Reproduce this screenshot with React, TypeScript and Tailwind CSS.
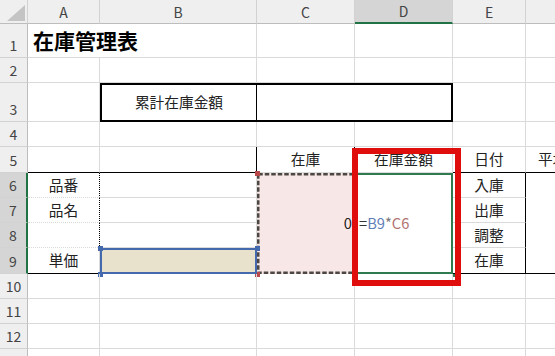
import React from "react";
import { twMerge } from "tailwind-merge";

type Kids = { className?: string; children?: React.ReactNode };

function Cell({ className = "", children }: Kids) {
  return (
    <div
      className={twMerge(
        "relative flex items-center justify-center border-r border-b border-[#dadada] text-[14.7px] leading-none text-[#222]",
        className
      )}
    >
      {children}
    </div>
  );
}

function ColHead({ label, active = false }: { label: string; active?: boolean }) {
  return (
    <div
      className={twMerge(
        "flex items-center justify-center border-r border-b border-r-[#d2d2d2] border-b-[#bdbdbd] bg-[#efefef] text-[14px] leading-none text-[#444]",
        active && "border-b-2 border-b-[#217346] bg-[#d5d5d5]"
      )}
    >
      {label}
    </div>
  );
}

function RowHead({ n, active = false }: { n?: number; active?: boolean }) {
  return (
    <div
      className={twMerge(
        "flex items-end justify-center border-r border-b border-r-[#bdbdbd] border-b-[#d2d2d2] bg-[#efefef] pb-[5px] text-[14px] leading-none text-[#444]",
        active && "border-r-2 border-r-[#217346] bg-[#d5d5d5]"
      )}
    >
      {n}
    </div>
  );
}

function Handle({ className = "" }: { className?: string }) {
  return <span className={twMerge("absolute h-[5px] w-[5px]", className)} />;
}

// copy-range "marching ants" frame, C6:C9 is 98 x 101
function Ants() {
  return (
    <svg className="pointer-events-none absolute -top-[2px] -left-[2px]" width="98" height="101" viewBox="0 0 98 101">
      <rect x="1.25" y="1.25" width="95.5" height="98.5" fill="none" stroke="#4d4743" strokeWidth="2.5" strokeDasharray="4.5 2" />
    </svg>
  );
}

export default function App() {
  return (
    <div className="relative h-[356px] w-[555px] overflow-hidden bg-white font-['Noto_Sans_CJK_JP',sans-serif]">
      <div className="grid grid-cols-[28px_72px_157px_98px_98px_73px_120px] grid-rows-[24px_34px_25px_39px_25px_26px_25px_25px_25px_26px_25px_25px_25px_30px]">
        {/* header row */}
        <div className="flex items-end justify-end border-r border-b border-r-[#d2d2d2] border-b-[#bdbdbd] bg-[#efefef] pr-[2px] pb-[2px]">
          <svg width="18" height="16" viewBox="0 0 18 16">
            <polygon points="18,0 18,16 0,16" fill="#c4c4c4" />
          </svg>
        </div>
        <ColHead label="A" />
        <ColHead label="B" />
        <ColHead label="C" />
        <ColHead label="D" active />
        <ColHead label="E" />
        <ColHead label="F" />

        {/* 1 */}
        <RowHead n={1} />
        <Cell className="col-span-2 justify-start pl-[5px] text-[21px] font-bold text-black">在庫管理表</Cell>
        <Cell />
        <Cell />
        <Cell />
        <Cell />

        {/* 2 */}
        <RowHead n={2} />
        <Cell />
        <Cell />
        <Cell />
        <Cell />
        <Cell />
        <Cell />

        {/* 3 */}
        <RowHead n={3} />
        <Cell />
        <Cell className="border-t-2 border-b-2 border-l-2 border-r border-black">累計在庫金額</Cell>
        <Cell className="col-span-2 border-t-2 border-b-2 border-r-2 border-black" />
        <Cell />
        <Cell />

        {/* 4 */}
        <RowHead n={4} />
        <Cell />
        <Cell />
        <Cell />
        <Cell />
        <Cell />
        <Cell />

        {/* 5 */}
        <RowHead n={5} />
        <Cell className="border-b-black" />
        <Cell className="border-r-black border-b-black" />
        <Cell className="border-r-black">在庫</Cell>
        <Cell>在庫金額</Cell>
        <Cell className="border-b-black">日付</Cell>
        <Cell className="justify-start border-b-black pl-[12px]">平均単価</Cell>

        {/* 6 */}
        <RowHead n={6} active />
        <Cell className="border-r-black border-dotted">品番</Cell>
        <Cell />
        <Cell className="row-span-4 justify-end border-2 border-transparent bg-[#f7e8e7] pr-[1px]">
          <Ants />
          <Handle className="-top-[4px] -left-[4px] bg-[#b9484a]" />
          <Handle className="-bottom-[5px] -left-[4px] bg-[#b9484a]" />
          0
        </Cell>
        <Cell className="row-span-4 justify-start border-2 border-[#2f7a4f] pl-[2px]">
          <span className="text-[#333]">=</span>
          <span className="text-[#5f80b8]">B9</span>
          <span className="text-[#777]">*</span>
          <span className="text-[#b27472]">C6</span>
          <Handle className="-right-[5px] -bottom-[5px] h-[4px] w-[4px] bg-[#2f7a4f]" />
        </Cell>
        <Cell className="border-r-black">入庫</Cell>
        <Cell className="row-span-4 border-b-black" />

        {/* 7 */}
        <RowHead n={7} active />
        <Cell className="border-r-black border-dotted">品名</Cell>
        <Cell />
        <Cell className="border-r-black">出庫</Cell>

        {/* 8 */}
        <RowHead n={8} active />
        <Cell className="border-r-black border-dotted" />
        <Cell />
        <Cell className="border-r-black">調整</Cell>

        {/* 9 */}
        <RowHead n={9} active />
        <Cell className="border-b-black">単価</Cell>
        <Cell className="border-2 border-[#4469ad] bg-[#e8e2cc]">
          <Handle className="-top-[4px] -left-[4px] bg-[#4469ad]" />
          <Handle className="-bottom-[5px] -left-[4px] bg-[#4469ad]" />
          <Handle className="-top-[4px] -right-[5px] bg-[#4469ad]" />
        </Cell>
        <Cell className="border-r-black border-b-black">在庫</Cell>

        {/* 10 - 13 */}
        <RowHead n={10} />
        <Cell />
        <Cell />
        <Cell />
        <Cell />
        <Cell />
        <Cell />

        <RowHead n={11} />
        <Cell />
        <Cell />
        <Cell />
        <Cell />
        <Cell />
        <Cell />

        <RowHead n={12} />
        <Cell />
        <Cell />
        <Cell />
        <Cell />
        <Cell />
        <Cell />

        <RowHead />
        <Cell />
        <Cell />
        <Cell />
        <Cell />
        <Cell />
        <Cell />
      </div>

      {/* red annotation frame */}
      <div className="pointer-events-none absolute top-[148px] left-[352px] h-[138px] w-[109px] border-[6px] border-[#e00d0d]" />
    </div>
  );
}
